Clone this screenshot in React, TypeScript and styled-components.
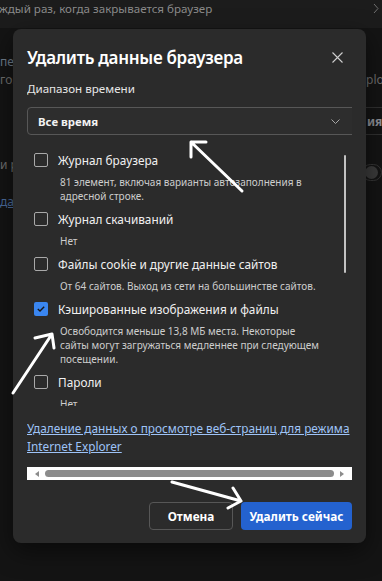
import React from "react"
import styled, { createGlobalStyle } from "styled-components"

const GlobalStyle = createGlobalStyle`
	html, body {
		margin: 0;
		padding: 0;
		background: #141414;
	}
	body {
		font-family: "Noto Sans", "Open Sans", sans-serif;
	}
	* {
		box-sizing: border-box;
	}
`

interface IClearItem {
	label: string
	desc: string[]
	checked: boolean
}

// lines kept as in the dialog, so the wrapping matches
const items: IClearItem[] = [
	{ label: "Журнал браузера", desc: ["81 элемент, включая варианты автозаполнения в", "адресной строке."], checked: false },
	{ label: "Журнал скачиваний", desc: ["Нет"], checked: false },
	{ label: "Файлы cookie и другие данные сайтов", desc: ["От 64 сайтов. Выход из сети на большинстве сайтов."], checked: false },
	{
		label: "Кэшированные изображения и файлы",
		desc: ["Освободится меньше 13,8 МБ места. Некоторые", "сайты могут загружаться медленнее при следующем", "посещении."],
		checked: true,
	},
	{ label: "Пароли", desc: ["Нет"], checked: false },
]

const App = () => (
	<Page>
		<GlobalStyle />
		<TopBar>
			<TopText>ждый раз, когда закрывается браузер</TopText>
			<svg width="6" height="11" viewBox="0 0 6 11">
				<path d="M1 1 L5 5.5 L1 10" stroke="#6f6f6f" strokeWidth="1" fill="none" />
			</svg>
		</TopBar>
		<BgRow $h={25} />
		<BgRow $h={18}>
			<BgText $tint="#6f7d8c">пе</BgText>
		</BgRow>
		<BgRow $h={18}>
			<BgText>го.</BgText>
			<BgRight>
				<BgText>plo</BgText>
			</BgRight>
		</BgRow>
		<BgRow $h={18} />
		<BgRow $h={28}>
			<span />
			<BgRight>
				<BgButton>ия</BgButton>
			</BgRight>
		</BgRow>
		<BgRow $h={21} />
		<BgRow $h={25}>
			<BgText $align="flex-start">и р</BgText>
			<BgRight $align="flex-end">
				<BgToggle>
					<BgKnob />
				</BgToggle>
			</BgRight>
		</BgRow>
		<BgRow $h={12} />
		<BgRow $h={16}>
			<BgLink>дал</BgLink>
		</BgRow>

		<Dialog>
			<Header>
				<Title>Удалить данные браузера</Title>
				<CloseButton aria-label="Закрыть">
					<svg width="11" height="11" viewBox="0 0 11 11">
						<path d="M0.5 0.5 L10.5 10.5 M10.5 0.5 L0.5 10.5" stroke="#cfcfcf" strokeWidth="1.1" />
					</svg>
				</CloseButton>
			</Header>
			<Body>
				<FieldLabel>Диапазон времени</FieldLabel>
				<Select>
					<SelectValue>Все время</SelectValue>
					<svg width="9" height="5" viewBox="0 0 9 5">
						<path d="M0.5 0.5 L4.5 4.5 L8.5 0.5" stroke="#a8a8a8" strokeWidth="1" fill="none" />
					</svg>
				</Select>
				<List>
					{items.map((item) => (
						<Item key={item.label}>
							<ItemRow>
								<Checkbox $checked={item.checked}>
									{item.checked && (
										<svg width="8" height="6" viewBox="0 0 8 6">
											<path d="M0.8 3 L3 5 L7.2 0.8" stroke="#161616" strokeWidth="1.4" fill="none" />
										</svg>
									)}
								</Checkbox>
								<ItemLabel>{item.label}</ItemLabel>
							</ItemRow>
							<ItemDesc>
								{item.desc.map((line) => (
									<DescLine key={line}>{line}</DescLine>
								))}
							</ItemDesc>
						</Item>
					))}
					<VScrollThumb />
				</List>
				<IeLink href="#">
					Удаление данных о просмотре веб-страниц для режима
					<br />
					Internet Explorer
				</IeLink>
				<HScrollbar>
					<ArrowLeft />
					<HThumb />
					<ArrowRight />
				</HScrollbar>
			</Body>
			<Footer>
				<CancelButton>Отмена</CancelButton>
				<PrimaryButton>Удалить сейчас</PrimaryButton>
			</Footer>
		</Dialog>

		<Annotations width="382" height="581" viewBox="0 0 382 581">
			<g stroke="#ffffff" strokeWidth="3" strokeLinecap="round" fill="none">
				<path d="M242 191 L191 142 M191 142 L206 142 M191 142 L191 157" />
				<path d="M13 393 L52 334 M52 334 L35 338 M52 334 L54 348" />
				<path d="M172 482 L241 501 M241 501 L233 488 M241 501 L228 508" />
			</g>
		</Annotations>
	</Page>
)

export default App

const Page = styled.div`
	position: relative;
	width: 382px;
	height: 581px;
	overflow: hidden;
	background: #141414;
`
const TopBar = styled.div`
	height: 28px;
	background: #1c1c1c;
	display: flex;
	justify-content: space-between;
	align-items: flex-start;
	padding: 2px 3px 0 0;
	svg {
		margin-top: 1px;
	}
`
const TopText = styled.span`
	margin-left: -1px;
	font-size: 11.6px;
	line-height: 14px;
	color: #8a8a8a;
	white-space: nowrap;
`
const BgRow = styled.div<{ $h: number }>`
	height: ${(p) => p.$h}px;
	display: flex;
	align-items: center;
	justify-content: space-between;
`
const BgText = styled.span<{ $tint?: string; $align?: string }>`
	font-size: 12px;
	line-height: 18px;
	color: ${(p) => p.$tint || "#6e6e6e"};
	white-space: nowrap;
	align-self: ${(p) => p.$align || "auto"};
`
const BgRight = styled.div<{ $align?: string }>`
	width: 16px;
	display: flex;
	align-items: center;
	align-self: ${(p) => p.$align || "auto"};
	white-space: nowrap;
`
const BgButton = styled.span`
	height: 28px;
	margin-left: -30px;
	padding: 0 12px 0 30px;
	display: flex;
	align-items: center;
	border: 1px solid #303030;
	font-size: 12px;
	font-weight: 700;
	color: #8b8d95;
`
const BgToggle = styled.span`
	display: flex;
	align-items: center;
	width: 40px;
	height: 17px;
	margin-left: -4px;
	border: 1px solid #353535;
	border-radius: 9px;
	padding-left: 2px;
`
const BgKnob = styled.span`
	width: 13px;
	height: 13px;
	border-radius: 50%;
	background: #3b3b3b;
`
const BgLink = styled.span`
	font-size: 12px;
	color: #4a6b9c;
	text-decoration: underline;
	white-space: nowrap;
`
const Dialog = styled.div`
	position: absolute;
	left: 13px;
	top: 29px;
	width: 353px;
	height: 514px;
	background: #2b2b2b;
	border-radius: 8px;
	padding: 14px 14px 13px;
	display: flex;
	flex-direction: column;
	box-shadow: 0 8px 24px rgba(0, 0, 0, 0.5);
`
const Header = styled.div`
	display: flex;
	align-items: center;
	justify-content: space-between;
	height: 28px;
	padding-right: 9px;
`
const Title = styled.h2`
	margin: 0;
	font-size: 17px;
	font-weight: 600;
	color: #ffffff;
	letter-spacing: -0.3px;
`
const CloseButton = styled.button`
	display: flex;
	padding: 0;
	border: 0;
	background: none;
`
const Body = styled.div`
	width: 325px;
	overflow: hidden;
	display: flex;
	flex-direction: column;
`
const FieldLabel = styled.div`
	margin-top: 9px;
	font-size: 11.6px;
	line-height: 18px;
	color: #e6e6e6;
`
const Select = styled.div`
	margin-top: 9px;
	width: 345px;
	flex-shrink: 0;
	height: 28px;
	display: flex;
	align-items: center;
	justify-content: space-between;
	padding: 0 31px 0 10px;
	border: 1px solid #575757;
	border-radius: 4px;
	background: #2d2d2d;
`
const SelectValue = styled.span`
	font-size: 11.4px;
	font-weight: 700;
	color: #f2f2f2;
`
const List = styled.div`
	position: relative;
	margin-top: 6px;
	height: 265px;
	flex-shrink: 0;
	overflow: hidden;
	padding: 9px 20px 0 7px;
`
const VScrollThumb = styled.div`
	position: absolute;
	top: 14px;
	right: 6px;
	width: 2px;
	height: 118px;
	border-radius: 1px;
	background: #c2c2c2;
`
const Item = styled.div`
	margin-bottom: 6px;
`
const ItemRow = styled.div`
	display: flex;
	align-items: center;
	gap: 10px;
	height: 20px;
`
const Checkbox = styled.span<{ $checked: boolean }>`
	width: 14px;
	height: 14px;
	flex-shrink: 0;
	display: flex;
	align-items: center;
	justify-content: center;
	border-radius: 2px;
	border: ${(p) => (p.$checked ? "none" : "1px solid #a9a9a9")};
	background: ${(p) => (p.$checked ? "#3a86f0" : "transparent")};
`
const ItemLabel = styled.span`
	font-size: 11.8px;
	color: #f0f0f0;
	white-space: nowrap;
`
const ItemDesc = styled.div`
	margin-top: 5px;
	padding-left: 26px;
	font-size: 10px;
	line-height: 14px;
	color: #cdcdcd;
`
const DescLine = styled.div`
	white-space: nowrap;
`
const IeLink = styled.a`
	margin-top: 13px;
	font-size: 11.8px;
	line-height: 18px;
	color: #9ec3f7;
	text-decoration: underline;
	white-space: nowrap;
`
const HScrollbar = styled.div`
	margin-top: 12px;
	height: 13px;
	flex-shrink: 0;
	background: #ffffff;
	display: flex;
	align-items: center;
	gap: 6px;
	padding: 0 8px;
`
const ArrowLeft = styled.span`
	width: 0;
	height: 0;
	border-top: 3px solid transparent;
	border-bottom: 3px solid transparent;
	border-right: 4px solid #8c8c8c;
`
const ArrowRight = styled.span`
	width: 0;
	height: 0;
	border-top: 3px solid transparent;
	border-bottom: 3px solid transparent;
	border-left: 4px solid #8c8c8c;
`
const HThumb = styled.span`
	flex: 1;
	height: 7px;
	border-radius: 4px;
	background: #8c8c8c;
`
const Footer = styled.div`
	margin-top: 22px;
	display: flex;
	justify-content: flex-end;
	gap: 8px;
`
const CancelButton = styled.button`
	width: 84px;
	height: 28px;
	border: 1px solid #575757;
	border-radius: 4px;
	background: #2b2b2b;
	color: #ffffff;
	font-family: inherit;
	font-size: 11.8px;
	font-weight: 700;
	white-space: nowrap;
`
const PrimaryButton = styled.button`
	width: 111px;
	height: 28px;
	border: 0;
	border-radius: 4px;
	background: #2462cf;
	color: #ffffff;
	font-family: inherit;
	font-size: 11.8px;
	font-weight: 700;
	white-space: nowrap;
`
const Annotations = styled.svg`
	position: absolute;
	left: 0;
	top: 0;
	pointer-events: none;
`
